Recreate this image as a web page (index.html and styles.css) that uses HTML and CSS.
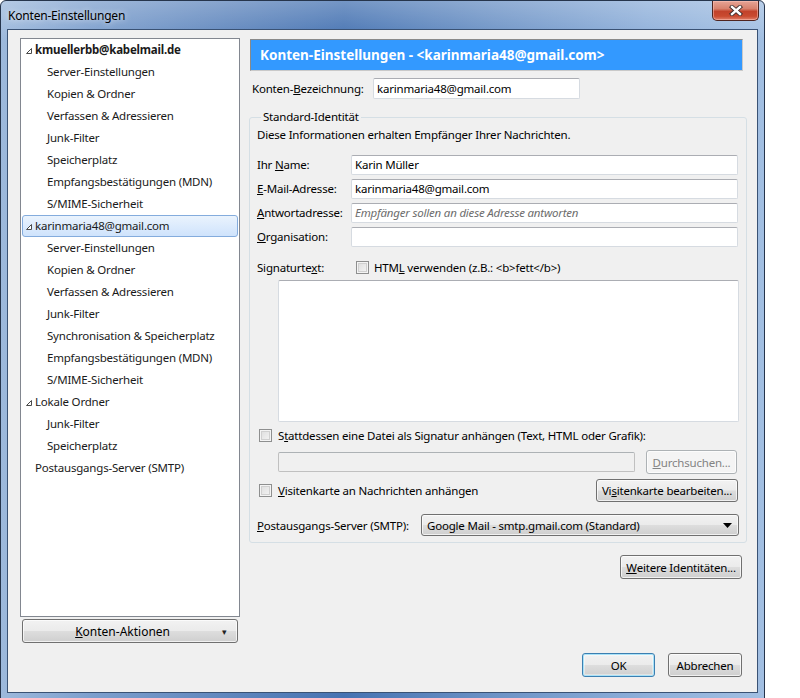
FILE: index.html
```html
<!DOCTYPE html>
<html lang="de">
<head>
<meta charset="utf-8">
<title>Konten-Einstellungen</title>
<link rel="stylesheet" href="styles.css">
</head>
<body>
<div class="window">
  <div class="titlebar">
    <span class="title">Konten-Einstellungen</span>
    <span class="close">
      <svg width="14" height="11" viewBox="0 0 14 11">
        <path d="M3,2 L11,9 M11,2 L3,9" stroke="#3a2a2a" stroke-width="4.2" stroke-linecap="square"/>
        <path d="M3,2 L11,9 M11,2 L3,9" stroke="#ffffff" stroke-width="2.4" stroke-linecap="square"/>
      </svg>
    </span>
  </div>
  <div class="client">
    <div class="main">
      <div class="leftcol">
        <div class="tree">
          <div class="row parent"><span class="twisty"><svg width="6" height="6" viewBox="0 0 6 6"><polygon points="5.5,0.5 5.5,5.5 0.5,5.5" fill="#ffffff" stroke="#4a4a4a" stroke-width="1"/></svg></span><b>kmuellerbb@kabelmail.de</b></div>
          <div class="row child">Server-Einstellungen</div>
          <div class="row child">Kopien &amp; Ordner</div>
          <div class="row child">Verfassen &amp; Adressieren</div>
          <div class="row child">Junk-Filter</div>
          <div class="row child">Speicherplatz</div>
          <div class="row child">Empfangsbestätigungen (MDN)</div>
          <div class="row child">S/MIME-Sicherheit</div>
          <div class="row parent selected"><span class="twisty"><svg width="6" height="6" viewBox="0 0 6 6"><polygon points="5.5,0.5 5.5,5.5 0.5,5.5" fill="#ffffff" stroke="#4a4a4a" stroke-width="1"/></svg></span>karinmaria48@gmail.com</div>
          <div class="row child">Server-Einstellungen</div>
          <div class="row child">Kopien &amp; Ordner</div>
          <div class="row child">Verfassen &amp; Adressieren</div>
          <div class="row child">Junk-Filter</div>
          <div class="row child">Synchronisation &amp; Speicherplatz</div>
          <div class="row child">Empfangsbestätigungen (MDN)</div>
          <div class="row child">S/MIME-Sicherheit</div>
          <div class="row parent"><span class="twisty"><svg width="6" height="6" viewBox="0 0 6 6"><polygon points="5.5,0.5 5.5,5.5 0.5,5.5" fill="#ffffff" stroke="#4a4a4a" stroke-width="1"/></svg></span>Lokale Ordner</div>
          <div class="row child">Junk-Filter</div>
          <div class="row child">Speicherplatz</div>
          <div class="row parent"><span class="twisty"></span>Postausgangs-Server (SMTP)</div>
        </div>
        <div class="btn actions"><span class="actions-label"><u>K</u>onten-Aktionen</span><span class="smallarrow">▾</span></div>
      </div>
      <div class="rightcol">
        <div class="header">Konten-Einstellungen - &lt;karinmaria48@gmail.com&gt;</div>
        <div class="namerow">
          <span class="label">Konten-<u>B</u>ezeichnung:</span>
          <span class="input name-input">karinmaria48@gmail.com</span>
        </div>
        <fieldset class="group">
          <legend>Standard-Identität</legend>
          <div class="desc">Diese Informationen erhalten Empfänger Ihrer Nachrichten.</div>
          <div class="fields">
            <span class="label">Ihr <u>N</u>ame:</span><span class="input">Karin Müller</span>
            <span class="label"><u>E</u>-Mail-Adresse:</span><span class="input">karinmaria48@gmail.com</span>
            <span class="label"><u>A</u>ntwortadresse:</span><span class="input placeholder">Empfänger sollen an diese Adresse antworten</span>
            <span class="label"><u>O</u>rganisation:</span><span class="input"></span>
          </div>
          <div class="sigrow">
            <span class="label siglabel">Signaturte<u>x</u>t:</span>
            <span class="check"></span>
            <span>HTM<u>L</u> verwenden (z.B.: &lt;b&gt;fett&lt;/b&gt;)</span>
          </div>
          <div class="textarea"></div>
          <div class="checkrow">
            <span class="check"></span>
            <span>S<u>t</u>attdessen eine Datei als Signatur anhängen (Text, HTML oder Grafik):</span>
          </div>
          <div class="filerow">
            <span class="input disabled file-input"></span>
            <span class="btn disabledbtn browse"><u>D</u>urchsuchen...</span>
          </div>
          <div class="vcardrow">
            <span class="check"></span>
            <span class="vcardtext"><u>V</u>isitenkarte an Nachrichten anhängen</span>
            <span class="btn vcardbtn">Vi<u>s</u>itenkarte bearbeiten...</span>
          </div>
          <div class="smtprow">
            <span class="label"><u>P</u>ostausgangs-Server (SMTP):</span>
            <span class="select"><span>Google Mail - smtp.gmail.com (Standard)</span><span class="selarrow"><svg width="9" height="5" viewBox="0 0 9 5"><polygon points="0,0 9,0 4.5,5" fill="#000"/></svg></span></span>
          </div>
        </fieldset>
        <div class="morerow">
          <span class="btn morebtn"><u>W</u>eitere Identitäten...</span>
        </div>
      </div>
    </div>
    <div class="footer">
      <span class="btn okbtn">OK</span>
      <span class="btn cancelbtn">Abbrechen</span>
    </div>
  </div>
</div>
</body>
</html>
```

FILE: styles.css
```css
* { box-sizing: border-box; }

html, body {
  margin: 0;
  padding: 0;
  background: #ffffff;
}

body {
  width: 800px;
  height: 698px;
  overflow: hidden;
  font-family: "Noto Sans", "Open Sans", sans-serif;
  font-size: 11.5px;
  letter-spacing: -0.2px;
  color: #000;
}

u { text-decoration: underline; text-underline-offset: 1px; }

.window {
  width: 765px;
  height: 700px;
  border: 1px solid #26354c;
  border-radius: 6px 6px 0 0;
  padding: 0 6px 6px 6px;
  background:
    linear-gradient(to bottom, rgba(255,255,255,0.25), rgba(255,255,255,0) 40px),
    linear-gradient(to right, #9db9dc 0%, #7d9fcd 12%, #5f86bd 30%, #4673b2 45%, #6d93c6 65%, #8fb0da 85%, #a2bfe2 100%);
  display: flex;
  flex-direction: column;
}

.titlebar {
  height: 28px;
  display: flex;
  align-items: flex-start;
  justify-content: space-between;
}

.title {
  padding-top: 6px;
  padding-left: 1px;
  font-size: 12px;
  color: #000;
  text-shadow: 0 0 6px rgba(255,255,255,0.9);
}

.close {
  width: 47px;
  height: 20px;
  margin-right: -1px;
  border: 1px solid #4f2520;
  border-top: none;
  border-radius: 0 0 5px 5px;
  background: linear-gradient(to bottom, #e6a496 0%, #d8826e 40%, #c2422b 55%, #c94a30 80%, #e0806a 100%);
  box-shadow: inset 0 0 0 1px rgba(255,200,190,0.5);
  display: flex;
  align-items: center;
  justify-content: center;
}

.client {
  flex: 1;
  border: 1px solid #3a5274;
  background: #f0f0f0;
  padding: 8px 11px 0 12px;
  display: flex;
  flex-direction: column;
}

.main {
  display: flex;
  gap: 9px;
}

.leftcol {
  width: 220px;
  display: flex;
  flex-direction: column;
}

.tree {
  height: 579px;
  background: #fff;
  border: 1px solid #828790;
  padding: 0 1px;
}

.row {
  height: 22px;
  line-height: 19px;
  white-space: nowrap;
  color: #1a1a1a;
  border: 1px solid transparent;
  border-radius: 3px;
}

.row.child { padding-left: 24px; }
.row.parent { padding-left: 3px; display: flex; align-items: center; padding-bottom: 1px; }

.twisty {
  width: 9px;
  height: 20px;
  display: inline-flex;
  align-items: center;
  padding-top: 3px;
}

.row b { font-weight: bold; }

.row.selected {
  background: linear-gradient(to bottom, #eaf3fd, #cfe3fc);
  border-color: #84acdd;
}

.btn {
  display: inline-flex;
  align-items: center;
  justify-content: center;
  height: 24px;
  border: 1px solid #707070;
  border-radius: 3px;
  background: linear-gradient(to bottom, #f2f2f2 0%, #ebebeb 48%, #dddddd 52%, #cfcfcf 100%);
  box-shadow: inset 0 0 0 1px rgba(255,255,255,0.7);
  white-space: nowrap;
  color: #000;
}

.actions {
  margin: 2px 2px 0 2px;
  height: 24px;
  padding: 0 10px 0 8px;
  justify-content: space-between;
}

.actions-label {
  flex: 1;
  text-align: center;
  padding-right: 8px;
  letter-spacing: 0;
  font-size: 12px;
}

.smallarrow {
  font-size: 9px;
  color: #222;
}

.rightcol {
  width: 497px;
  display: flex;
  flex-direction: column;
}

.header {
  margin-top: 1px;
  margin-left: 1px;
  width: 493px;
  height: 32px;
  background: #3399ff;
  border: 1px solid #8a8a8a;
  border-right-color: #c9c9c9;
  border-bottom-color: #c9c9c9;
  color: #fff;
  font-weight: bold;
  font-size: 13.5px;
  letter-spacing: 0;
  line-height: 30px;
  padding-left: 9px;
  white-space: nowrap;
}

.label { white-space: nowrap; }

.namerow {
  margin-top: 7px;
  display: flex;
  align-items: center;
  padding-left: 3px;
}

.namerow .label { width: 121px; }

.input {
  display: flex;
  align-items: center;
  height: 20px;
  background: #fff;
  border: 1px solid #d6dbe1;
  border-top-color: #abadb3;
  border-radius: 2px;
  padding-left: 3px;
  padding-bottom: 1px;
  white-space: nowrap;
  overflow: hidden;
}

.name-input { width: 207px; height: 21px; }

.placeholder { color: #6d6d6d; font-style: italic; }

.group {
  margin: 10px 0 0 0;
  width: 497px;
  border: 1px solid #d5dfe5;
  border-radius: 3px;
  padding: 0 7px 6px 7px;
}

.group legend {
  padding: 0 2px;
  margin-left: 4px;
  line-height: 16px;
}

.desc {
  margin-top: 2px;
  line-height: 16px;
}

.fields {
  margin-top: 12px;
  display: grid;
  grid-template-columns: 94px 387px;
  row-gap: 4px;
  align-items: center;
}

.fields .label { padding-bottom: 1px; }

.sigrow {
  margin-top: 12px;
  display: flex;
  align-items: center;
  height: 16px;
}

.siglabel { width: 99px; }

.check {
  display: inline-block;
  width: 13px;
  height: 13px;
  border: 1px solid #8e8f8f;
  background: linear-gradient(135deg, #dcdcdc, #f6f6f6);
  box-shadow: inset 0 0 0 1px #f4f4f4, inset 0 0 0 2px #d0d0d0;
  margin-right: 5px;
  flex: none;
}

.textarea {
  margin-top: 5px;
  margin-left: 21px;
  width: 461px;
  height: 142px;
  background: #fff;
  border: 1px solid #d6dbe1;
  border-top-color: #abadb3;
  border-radius: 2px;
}

.checkrow {
  margin-top: 5px;
  height: 16px;
  display: flex;
  align-items: center;
  padding-left: 2px;
}

.checkrow .check { margin-right: 6px; }

.filerow {
  margin-top: 7px;
  display: flex;
  align-items: center;
  padding-left: 21px;
  height: 24px;
}

.file-input {
  width: 357px;
  height: 20px;
  background: #f0f0f0;
  border-color: #c0c0c0;
  border-top-color: #adb2b5;
}

.browse {
  margin-left: 11px;
  width: 91px;
  height: 24px;
  color: #838383;
  border-color: #adb2b5;
  background: #f4f4f4;
}

.vcardrow {
  margin-top: 5px;
  display: flex;
  align-items: center;
  padding-left: 2px;
  height: 23px;
}

.vcardrow .check { margin-right: 6px; }

.vcardtext { flex: 1; }

.vcardbtn {
  width: 142px;
  height: 23px;
  margin-right: 1px;
}

.smtprow {
  margin-top: 12px;
  display: flex;
  align-items: center;
  height: 22px;
}

.smtprow .label { width: 164px; }

.select {
  width: 318px;
  height: 22px;
  display: flex;
  align-items: center;
  justify-content: space-between;
  padding: 0 6px 0 5px;
  border: 1px solid #707070;
  border-radius: 3px;
  background: linear-gradient(to bottom, #f2f2f2 0%, #ebebeb 48%, #dddddd 52%, #cfcfcf 100%);
  box-shadow: inset 0 0 0 1px rgba(255,255,255,0.7);
  white-space: nowrap;
}

.selarrow { display: inline-flex; }

.morerow {
  margin-top: 12px;
  display: flex;
  justify-content: flex-end;
  padding-right: 4px;
}

.morebtn {
  width: 122px;
  height: 24px;
}

.footer {
  margin-top: 10px;
  display: flex;
  justify-content: flex-end;
  gap: 13px;
  padding-right: 4px;
}

.okbtn {
  width: 73px;
  height: 24px;
  border-color: #3c7fb1;
  box-shadow: inset 0 0 0 1px #a9e2f8, inset 0 0 0 2px rgba(255,255,255,0.4);
}

.cancelbtn {
  width: 74px;
  height: 24px;
}
```
